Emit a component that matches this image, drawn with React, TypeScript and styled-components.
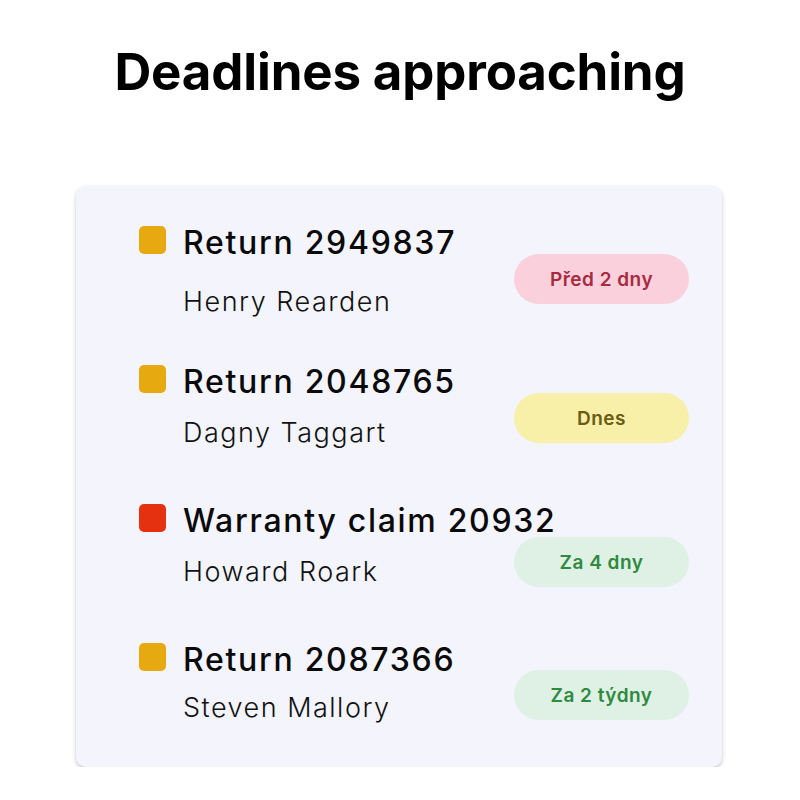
import React from 'react';
import styled, { createGlobalStyle } from 'styled-components';

type Tone = 'overdue' | 'today' | 'upcoming';

interface Deadline {
  id: string;
  title: string;
  person: string;
  due: string;
  tone: Tone;
  urgent?: boolean;
  nameGap: number;
  badgeTop: number;
}

const deadlines: Deadline[] = [
  { id: '2949837', title: 'Return 2949837', person: 'Henry Rearden', due: 'Před 2 dny', tone: 'overdue', nameGap: 24, badgeTop: 30 },
  { id: '2048765', title: 'Return 2048765', person: 'Dagny Taggart', due: 'Dnes', tone: 'today', nameGap: 16, badgeTop: 30 },
  { id: '20932', title: 'Warranty claim 20932', person: 'Howard Roark', due: 'Za 4 dny', tone: 'upcoming', urgent: true, nameGap: 16, badgeTop: 35 },
  { id: '2087366', title: 'Return 2087366', person: 'Steven Mallory', due: 'Za 2 týdny', tone: 'upcoming', nameGap: 13, badgeTop: 29 },
];

const toneColors: Record<Tone, { bg: string; fg: string }> = {
  overdue: { bg: '#f9d0dc', fg: '#a82a3e' },
  today: { bg: '#f8efa9', fg: '#6b5c12' },
  upcoming: { bg: '#dff0e5', fg: '#2d8a3e' },
};

const GlobalStyle = createGlobalStyle`
  html, body {
    margin: 0;
    padding: 0;
    background: #ffffff;
  }
  body {
    font-family: Inter, "Noto Sans", sans-serif;
    color: #000000;
  }
`;

const Page = styled.div`
  width: 800px;
  padding-top: 41px;
  box-sizing: border-box;
`;

const Heading = styled.h1`
  margin: 0;
  text-align: center;
  font-size: 51px;
  line-height: 62px;
  font-weight: 700;
  letter-spacing: -0.15px;
`;

const Card = styled.section`
  width: 646px;
  margin: 83px 0 0 76px;
  padding: 38px 33px 43px 63px;
  box-sizing: border-box;
  background: #f3f4fc;
  border-radius: 10px;
  box-shadow: 0 2px 4px rgba(0, 0, 0, 0.22);
`;

const List = styled.ul`
  list-style: none;
  margin: 0;
  padding: 0;
  display: flex;
  flex-direction: column;
`;

const Row = styled.li`
  height: 139px;
  display: flex;
  align-items: flex-start;

  &:last-child {
    height: auto;
  }
`;

const Marker = styled.span<{ $urgent?: boolean }>`
  flex: none;
  width: 27px;
  height: 28px;
  margin-top: 2px;
  margin-right: 17px;
  border-radius: 5px;
  background: ${(p) => (p.$urgent ? '#e5310f' : '#e7a910')};
`;

const Info = styled.div`
  flex: 1;
  min-width: 0;
  display: flex;
  flex-direction: column;
`;

const Title = styled.span`
  font-size: 32px;
  line-height: 37px;
  font-weight: 500;
  letter-spacing: 1.7px;
  white-space: nowrap;
  color: #0a0a0a;
`;

const Person = styled.span<{ $gap: number }>`
  margin-top: ${(p) => p.$gap}px;
  font-size: 27px;
  line-height: 33px;
  font-weight: 300;
  letter-spacing: 1.5px;
  color: #111111;
`;

const Badge = styled.span<{ $tone: Tone; $top: number }>`
  flex: none;
  width: 175px;
  height: 50px;
  margin-top: ${(p) => p.$top}px;
  border-radius: 25px;
  display: flex;
  align-items: center;
  justify-content: center;
  font-size: 19px;
  font-weight: 600;
  letter-spacing: 0.5px;
  background: ${(p) => toneColors[p.$tone].bg};
  color: ${(p) => toneColors[p.$tone].fg};
`;

export default function App() {
  return (
    <Page>
      <GlobalStyle />
      <Heading>Deadlines approaching</Heading>
      <Card>
        <List>
          {deadlines.map((d) => (
            <Row key={d.id}>
              <Marker $urgent={d.urgent} />
              <Info>
                <Title>{d.title}</Title>
                <Person $gap={d.nameGap}>{d.person}</Person>
              </Info>
              <Badge $tone={d.tone} $top={d.badgeTop}>{d.due}</Badge>
            </Row>
          ))}
        </List>
      </Card>
    </Page>
  );
}
